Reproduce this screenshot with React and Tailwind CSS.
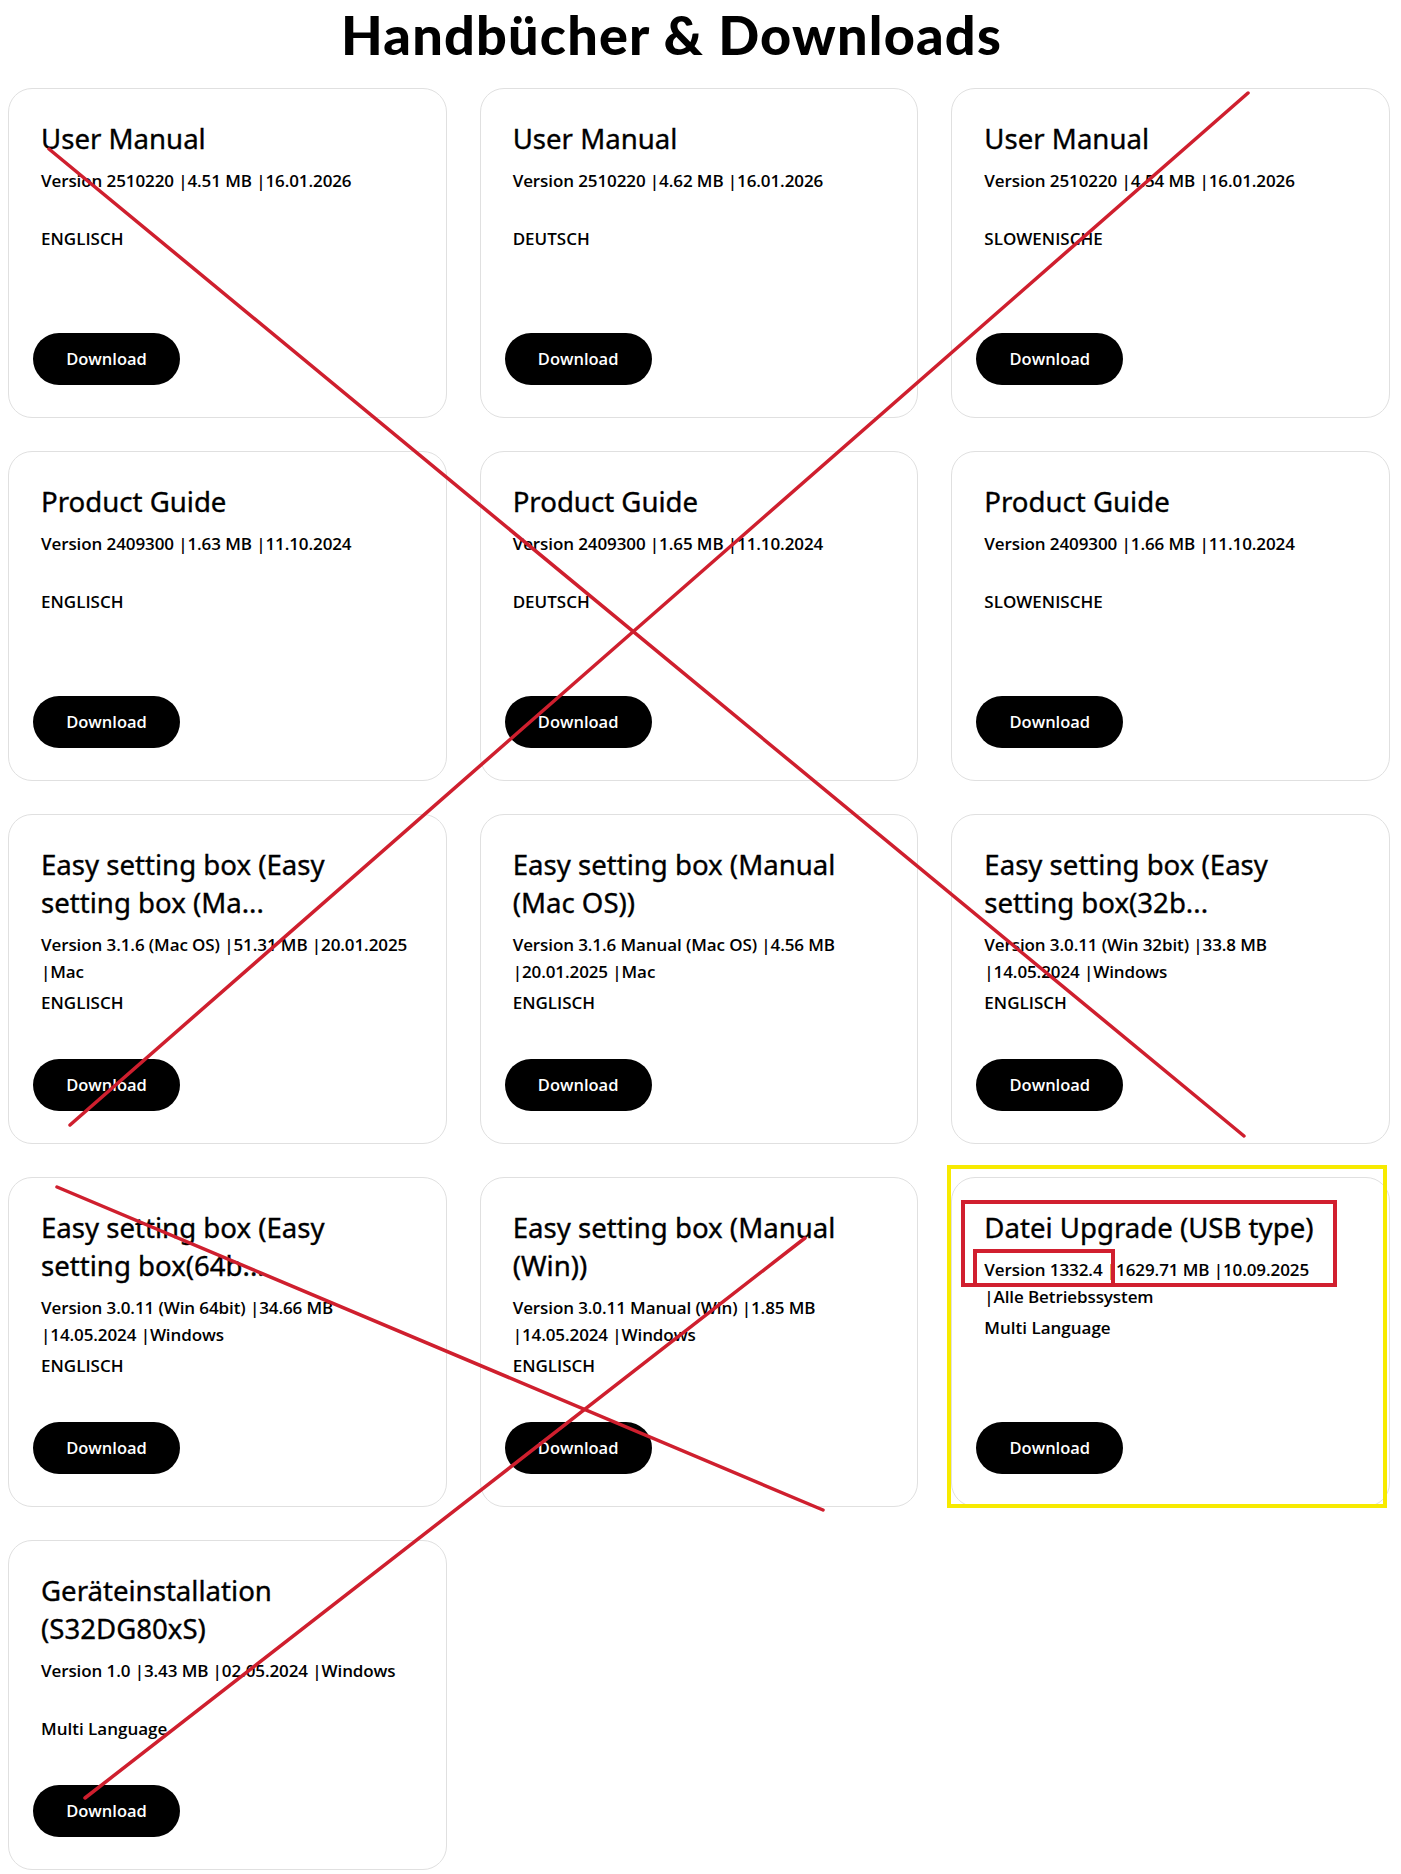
import React from "react";

const cards = [
  { title: ["User Manual"], version: ["Version 2510220 |4.51 MB |16.01.2026"], lang: "ENGLISCH" },
  { title: ["User Manual"], version: ["Version 2510220 |4.62 MB |16.01.2026"], lang: "DEUTSCH" },
  { title: ["User Manual"], version: ["Version 2510220 |4.54 MB |16.01.2026"], lang: "SLOWENISCHE" },
  { title: ["Product Guide"], version: ["Version 2409300 |1.63 MB |11.10.2024"], lang: "ENGLISCH" },
  { title: ["Product Guide"], version: ["Version 2409300 |1.65 MB |11.10.2024"], lang: "DEUTSCH" },
  { title: ["Product Guide"], version: ["Version 2409300 |1.66 MB |11.10.2024"], lang: "SLOWENISCHE" },
  {
    title: ["Easy setting box (Easy", "setting box (Ma..."],
    version: ["Version 3.1.6 (Mac OS) |51.31 MB |20.01.2025", "|Mac"],
    lang: "ENGLISCH",
  },
  {
    title: ["Easy setting box (Manual", "(Mac OS))"],
    version: ["Version 3.1.6 Manual (Mac OS) |4.56 MB", "|20.01.2025 |Mac"],
    lang: "ENGLISCH",
  },
  {
    title: ["Easy setting box (Easy", "setting box(32b..."],
    version: ["Version 3.0.11 (Win 32bit) |33.8 MB", "|14.05.2024 |Windows"],
    lang: "ENGLISCH",
  },
  {
    title: ["Easy setting box (Easy", "setting box(64b..."],
    version: ["Version 3.0.11 (Win 64bit) |34.66 MB", "|14.05.2024 |Windows"],
    lang: "ENGLISCH",
  },
  {
    title: ["Easy setting box (Manual", "(Win))"],
    version: ["Version 3.0.11 Manual (Win) |1.85 MB", "|14.05.2024 |Windows"],
    lang: "ENGLISCH",
  },
  {
    title: ["Datei Upgrade (USB type)"],
    version: ["Version 1332.4 |1629.71 MB |10.09.2025", "|Alle Betriebssystem"],
    lang: "Multi Language",
  },
  {
    title: ["Geräteinstallation", "(S32DG80xS)"],
    version: ["Version 1.0 |3.43 MB |02.05.2024 |Windows"],
    lang: "Multi Language",
  },
];

function Card({ card }) {
  return (
    <div className="flex h-[330px] flex-col rounded-[24px] border border-[#e0e0e0] bg-white pl-[32px] pr-[12px] pt-[30px] pb-[32px]">
      <h3
        className="text-[27.6px] font-normal leading-[38px] text-black [-webkit-text-stroke:0.35px_black]"
        style={{ fontFamily: '"Noto Sans", "Open Sans", sans-serif' }}
      >
        {card.title.map((t, i) => (
          <span key={i} className="block whitespace-nowrap">
            {t}
          </span>
        ))}
      </h3>
      <div className="mt-[11px] min-h-[53px] text-[17px] font-semibold leading-[26.5px] tracking-[-0.1px] text-black">
        {card.version.map((v, i) => (
          <span key={i} className="block whitespace-nowrap">
            {v}
          </span>
        ))}
      </div>
      <div className="mt-[4.5px] text-[17px] font-semibold leading-[26.5px] text-black">{card.lang}</div>
      <button className="mt-auto ml-[-8px] flex h-[52px] w-[147px] items-center justify-center rounded-full bg-black text-[16.5px] font-semibold text-white">
        Download
      </button>
    </div>
  );
}

export default function App() {
  return (
    <div
      className="relative min-h-[1874px] w-[1401px] bg-white"
      style={{ fontFamily: '"Open Sans", "Noto Sans", sans-serif' }}
    >
      <h1
        className="pt-[8px] pr-[58px] text-center text-[54px] font-black leading-[54px] tracking-[1.2px] text-black"
        style={{ fontFamily: 'Lato, "Noto Sans", sans-serif' }}
      >
        Handbücher &amp; Downloads
      </h1>
      <div className="mt-[26px] grid grid-cols-3 gap-x-[33px] gap-y-[33px] pl-[8px] pr-[11px]">
        {cards.map((c, i) => (
          <Card key={i} card={c} />
        ))}
      </div>

      <svg
        className="pointer-events-none absolute left-0 top-0"
        width="1401"
        height="1874"
        viewBox="0 0 1401 1874"
      >
        <g stroke="#cf1f2e" strokeWidth="3.5" strokeLinecap="round" fill="none">
          <line x1="49" y1="149" x2="1244" y2="1136" />
          <line x1="1248" y1="93" x2="70" y2="1125" />
          <line x1="57" y1="1187" x2="823" y2="1510" />
          <line x1="805" y1="1238" x2="85" y2="1798" />
        </g>
        <rect x="949" y="1167" width="436" height="339" fill="none" stroke="#f7ea00" strokeWidth="4" />
        <rect x="963" y="1202" width="372" height="83" fill="none" stroke="#d11f2f" strokeWidth="4" />
        <rect x="975" y="1251" width="138" height="34" fill="none" stroke="#d11f2f" strokeWidth="4" />
      </svg>
    </div>
  );
}
